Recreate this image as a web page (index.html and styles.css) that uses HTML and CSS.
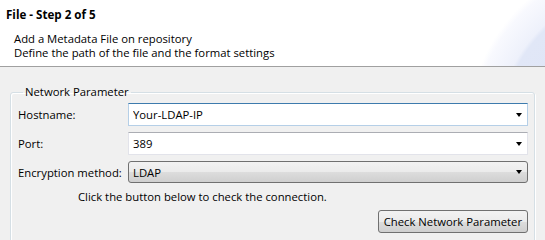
FILE: index.html
```html
<!DOCTYPE html>
<html lang="en">
<head>
    <meta charset="UTF-8">
    <title>File - Step 2 of 5</title>
    <link rel="stylesheet" href="styles.css">
</head>
<body>
    <div class="wizard">
        <header class="wizard-header">
            <h1>File - Step 2 of 5</h1>
            <p>Add a Metadata File on repository<br>Define the path of the file and the format settings</p>
        </header>

        <main class="wizard-body">
            <fieldset class="group">
                <legend>Network Parameter</legend>
                <div class="form-grid">
                    <label for="hostname">Hostname:</label>
                    <div class="combo editable focused">
                        <input id="hostname" type="text" value="Your-LDAP-IP">
                        <span class="arrow"></span>
                    </div>

                    <label for="port">Port:</label>
                    <div class="combo editable">
                        <input id="port" type="text" value="389">
                        <span class="arrow"></span>
                    </div>

                    <label for="encryption">Encryption method:</label>
                    <div class="combo readonly" id="encryption">
                        <span class="combo-value">LDAP</span>
                        <span class="arrow"></span>
                    </div>
                </div>
                <p class="hint">Click the button below to check the connection.</p>
                <div class="actions">
                    <button type="button" class="form-button">Check Network Parameter</button>
                </div>
            </fieldset>
        </main>
    </div>
</body>
</html>
```

FILE: styles.css
```css
:root {
    --panel-bg: #F0F0F0;
    --header-bg: #FFFFFF;
    --text-dark: #000000;
    --group-border: #D5DFE5;
    --field-border: #ABADB3;
    --field-side: #E2E3EA;
    --focus-border: #3D7BAD;
    --focus-side: #B5CFE7;
    --button-border: #707070;
    --font-family: 'Open Sans', 'Noto Sans', sans-serif;
}
*, *::before, *::after { box-sizing: border-box; }
body { margin: 0; font-family: var(--font-family); font-size: 11.3px; color: var(--text-dark); background-color: var(--panel-bg); }
.wizard { width: 545px; height: 240px; overflow: hidden; }

.wizard-header {
    height: 67px; padding: 4px 6px 0;
    background-color: var(--header-bg);
    background-image: radial-gradient(circle at 640px 130px, #DCE3F5 0, #E1E7F7 138px, #EEF1FB 142px, #F8F9FE 166px, #FFFFFF 172px);
    border-bottom: 1px solid #A0A0A0;
}
.wizard-header h1 { font-size: 11.6px; font-weight: 700; margin: 0; line-height: 22px; }
.wizard-header p { margin: 6px 0 0 8px; line-height: 14px; }

.wizard-body { padding: 17px 10px 0 10px; }
.group {
    margin: 0; padding: 3px 6px 20px 7px;
    border: 1px solid var(--group-border); border-radius: 3px;
    box-shadow: inset 1px 1px 0 #FFFFFF, 1px 1px 0 #FFFFFF;
}
.group legend { padding: 0 2px; margin-left: 5px; line-height: 16px; }

.form-grid { display: grid; grid-template-columns: 110px 1fr; row-gap: 6px; align-items: center; }
.form-grid label { white-space: nowrap; }

.combo { position: relative; display: flex; align-items: center; height: 23px; padding: 0 20px 0 4px; }
.combo.editable { background-color: #FFFFFF; border: 1px solid var(--field-side); border-top-color: var(--field-border); }
.combo.focused { border-color: var(--focus-side); border-top-color: var(--focus-border); }
.combo input { border: none; outline: none; padding: 0; margin: 0; width: 100%; font: inherit; color: inherit; background: transparent; }
.combo.readonly {
    height: 22px; border: 1px solid var(--button-border); border-radius: 3px;
    background: linear-gradient(#F2F2F2 0, #EBEBEB 50%, #DDDDDD 51%, #CFCFCF 100%);
}
.arrow { position: absolute; right: 5px; top: 50%; margin-top: -2px; width: 0; height: 0; border-left: 3.5px solid transparent; border-right: 3.5px solid transparent; border-top: 4px solid #000000; }

.hint { margin: 7px 0 0 60px; line-height: 14px; }
.actions { display: flex; justify-content: flex-end; margin-top: 6px; }
.form-button {
    height: 23px; padding: 0 5px; font: inherit; color: inherit;
    border: 1px solid var(--button-border); border-radius: 3px;
    background: linear-gradient(#F2F2F2 0, #EBEBEB 50%, #DDDDDD 51%, #CFCFCF 100%);
}
```
